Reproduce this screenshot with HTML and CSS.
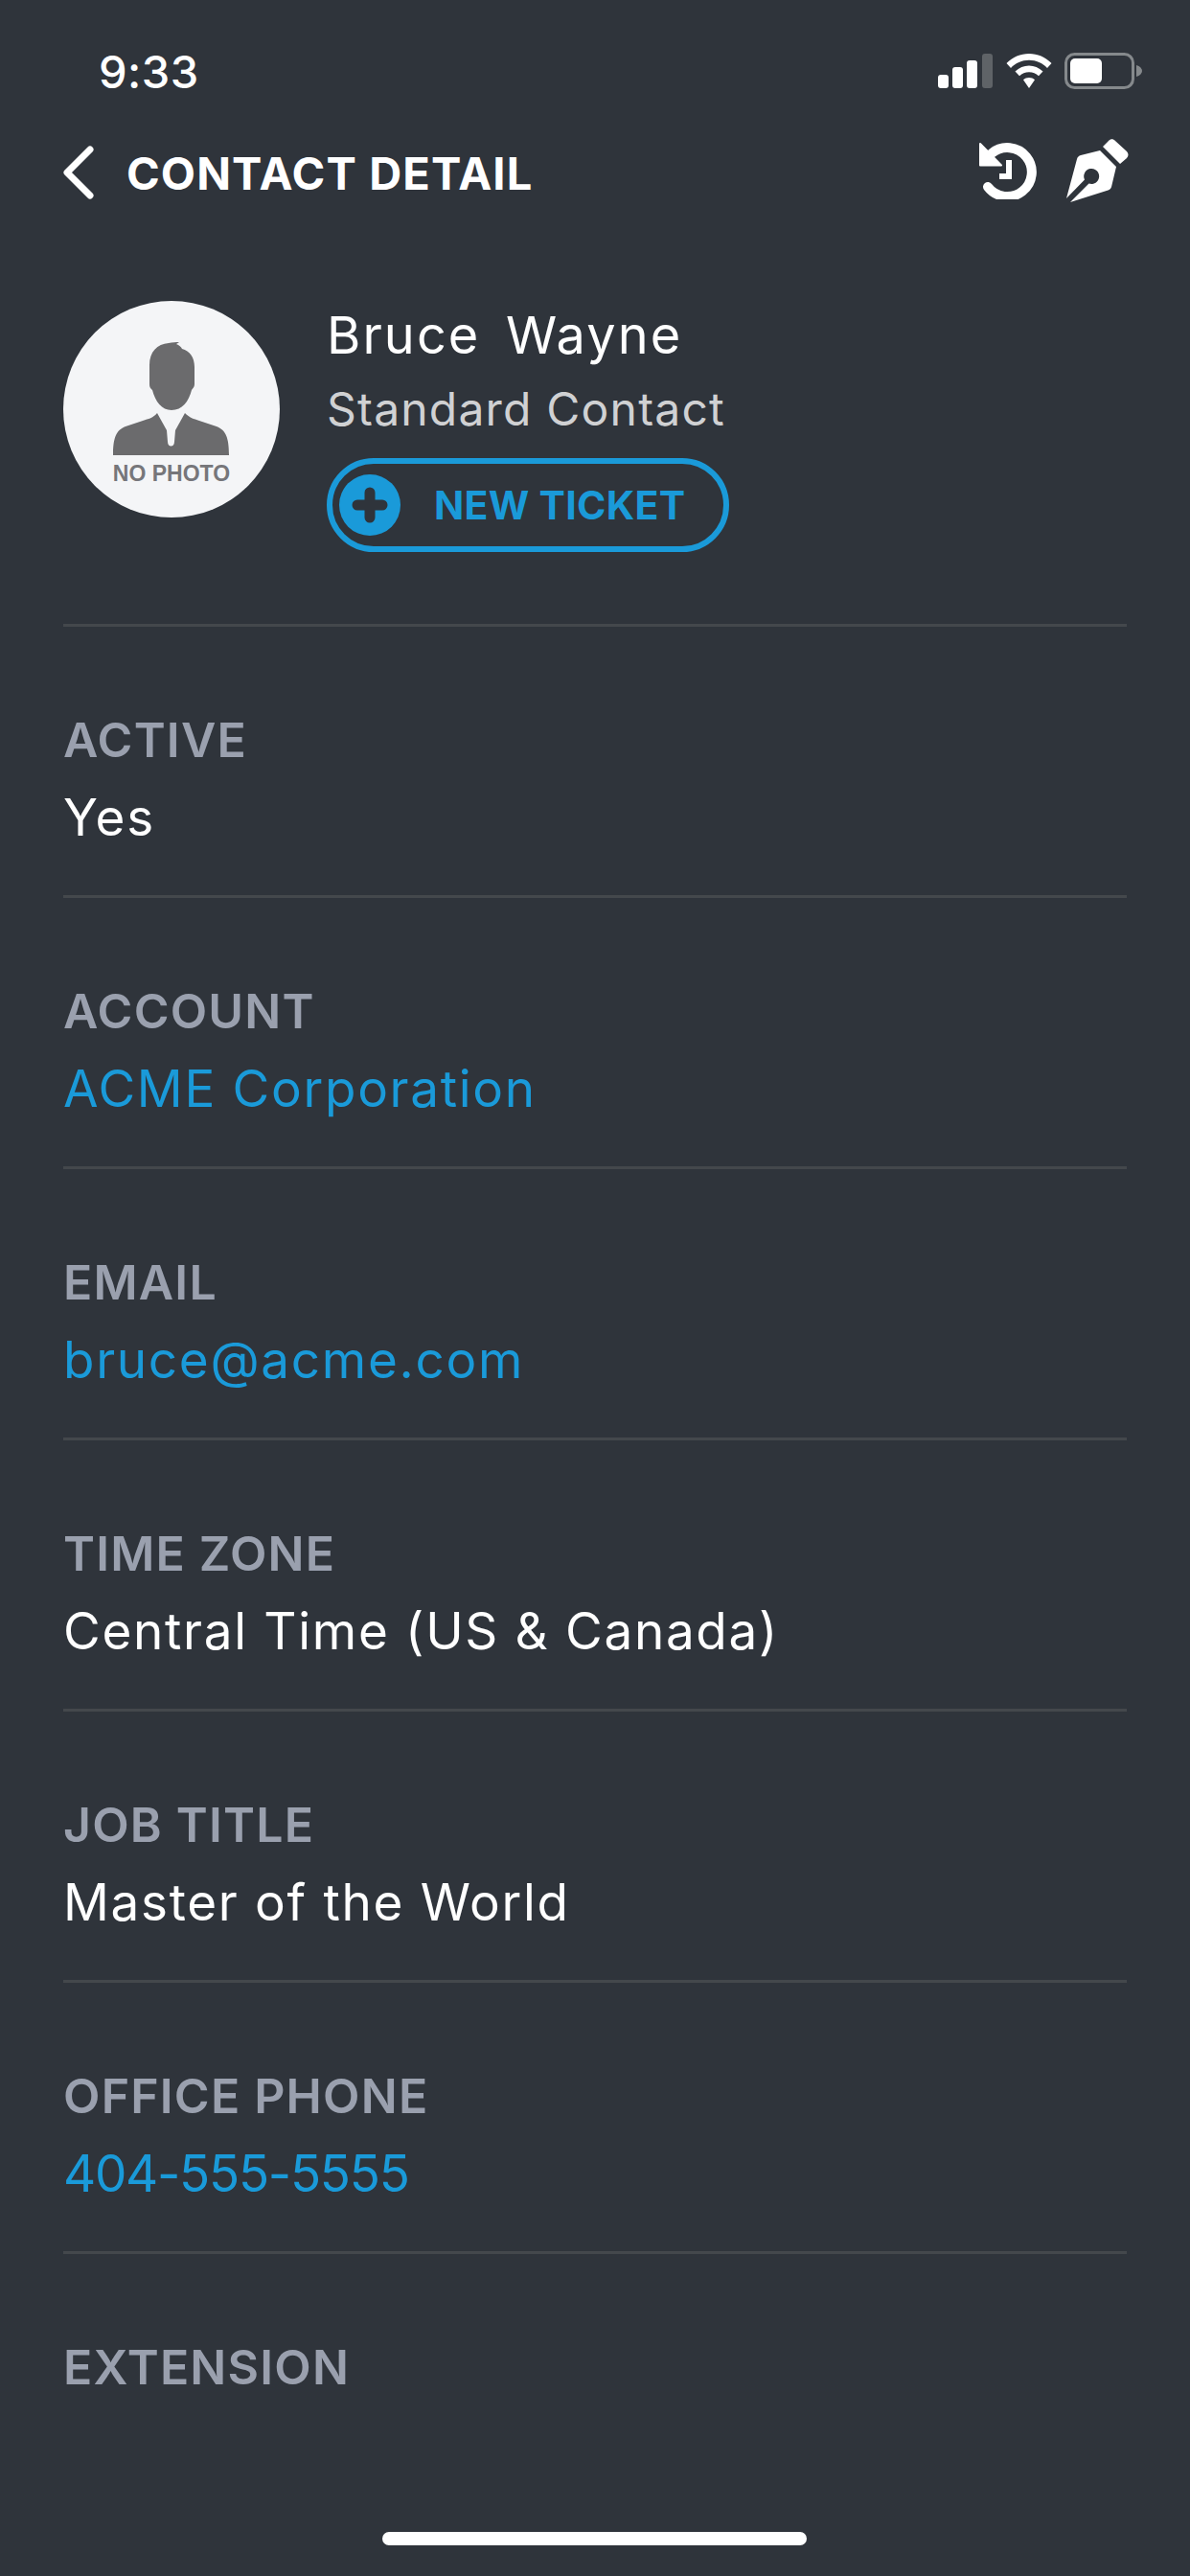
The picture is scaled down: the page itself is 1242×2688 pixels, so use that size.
FILE: index.html
```html
<!DOCTYPE html>
<html lang="en">
<head>
    <meta charset="UTF-8">
    <meta name="viewport" content="width=device-width, initial-scale=1.0">
    <title>Contact Detail</title>
    <link rel="stylesheet" href="styles.css">
</head>
<body>
    <div class="screen">
        <div class="status-bar">
            <span class="clock">9:33</span>
            <div class="status-icons">
                <svg class="signal" width="58" height="36" viewBox="0 0 58 36">
                    <rect x="0" y="22" width="11" height="14" rx="3" fill="#fff"/>
                    <rect x="15" y="14" width="11" height="22" rx="3" fill="#fff"/>
                    <rect x="30" y="7" width="11" height="29" rx="3" fill="#fff"/>
                    <rect x="46" y="0" width="11" height="36" rx="3" fill="#5f6367"/>
                </svg>
                <svg class="wifi" width="48" height="36" viewBox="0 0 48 36">
                    <path d="M24 0C15 0 7 3.500 0.500 10L5 15C10 9.800 16.500 6.800 24 6.800S38 9.800 43 15L47.500 10C41 3.500 33 0 24 0Z" fill="#fff"/>
                    <path d="M24 12.500C18.500 12.500 13.800 14.600 9.500 18.500L14 23.300C16.800 20.800 20 19.300 24 19.300S31.200 20.800 34 23.300L38.500 18.500C34.200 14.600 29.500 12.500 24 12.500Z" fill="#fff"/>
                    <path d="M24 25C21.500 25 19.800 25.800 18 27.300L24 36L30 27.300C28.200 25.800 26.500 25 24 25Z" fill="#fff"/>
                </svg>
                <svg class="battery" width="82" height="38" viewBox="0 0 82 38">
                    <rect x="1.500" y="1.500" width="70" height="35" rx="9" fill="none" stroke="#85898c" stroke-width="3"/>
                    <rect x="6" y="6" width="33" height="26" rx="5" fill="#fff"/>
                    <path d="M75 13C79 14 81 16.500 81 19S79 24 75 25Z" fill="#85898c"/>
                </svg>
            </div>
        </div>

        <div class="nav-bar">
            <svg class="back-icon" width="32" height="56" viewBox="0 0 32 56">
                <path d="M28 4L4 28L28 52" fill="none" stroke="#fff" stroke-width="7" stroke-linecap="round" stroke-linejoin="round"/>
            </svg>
            <span class="nav-title">CONTACT DETAIL</span>
            <div class="nav-actions">
                <svg width="60" height="60" viewBox="0 0 60 60">
                    <path d="M13 12A25.500 25.500 0 1 1 9 47" fill="none" stroke="#fff" stroke-width="10" stroke-linecap="round"/>
                    <path d="M1 2L1 24.500L23 24.500Z" fill="#fff" stroke="#fff" stroke-width="2" stroke-linejoin="round"/>
                    <path d="M31 19V36H21" fill="none" stroke="#fff" stroke-width="6"/>
                </svg>
                <svg width="68" height="68" viewBox="0 0 68 68">
                    <path d="M41 9L47 3C49 0.500 52 0.500 54 3L66 14C68 16 68 19 66 21L59 27Z" fill="#fff"/>
                    <path fill-rule="evenodd" fill="#fff" d="M38 13L55 30L50 51C49.500 53 48 54 46.500 54.600L7 67L26.500 47.500A8 8 0 1 0 22 43.500L3 63L14 22C14.500 20 16 18.500 18 18Z"/>
                </svg>
            </div>
        </div>

        <div class="profile">
            <div class="avatar">
                <svg width="122" height="118" viewBox="0 0 122 118">
                    <path d="M38 24C38 10 46 2 58 1C62 0 66 0 69 0L66 2C69 3 71 5 72 7C80 9 85 16 85 26V44C85 47 83 48 82 50C79 62 72 71 61 71C51 71 44 62 41 50C39 48 38 47 38 44Z" fill="#6b6b6d"/>
                    <path d="M46 74L56 92L57 104C57 110 64 110 64 104L65 92L75 74C80 79 84 80 90 82L108 88C118 92 121 100 121 118H0C0 100 3 92 13 88L31 82C37 80 42 79 46 74Z" fill="#6b6b6d"/>
                </svg>
                <span class="no-photo">NO PHOTO</span>
            </div>
            <div class="profile-info">
                <div class="profile-name">Bruce&nbsp; Wayne</div>
                <div class="profile-type">Standard Contact</div>
                <a class="new-ticket">
                    <svg width="64" height="64" viewBox="0 0 64 64">
                        <circle cx="32" cy="32" r="32" fill="#1a9ad9"/>
                        <path d="M32 19V45M19 32H45" stroke="#2f343b" stroke-width="11" stroke-linecap="round"/>
                    </svg>
                    <span>NEW TICKET</span>
                </a>
            </div>
        </div>

        <div class="field">
            <div class="field-label">ACTIVE</div>
            <div class="field-value">Yes</div>
        </div>
        <div class="field">
            <div class="field-label">ACCOUNT</div>
            <div class="field-value link">ACME Corporation</div>
        </div>
        <div class="field">
            <div class="field-label">EMAIL</div>
            <div class="field-value link">bruce@acme.com</div>
        </div>
        <div class="field">
            <div class="field-label">TIME ZONE</div>
            <div class="field-value">Central Time (US &amp; Canada)</div>
        </div>
        <div class="field">
            <div class="field-label">JOB TITLE</div>
            <div class="field-value">Master of the World</div>
        </div>
        <div class="field">
            <div class="field-label">OFFICE PHONE</div>
            <div class="field-value link phone">404-555-5555</div>
        </div>
        <div class="field">
            <div class="field-label">EXTENSION</div>
        </div>

        <div class="home-indicator"></div>
    </div>
</body>
</html>
```

FILE: styles.css
```css
html, body {
    margin: 0;
    padding: 0;
    background-color: #2f343b;
}
.screen {
    height: 2688px;
    overflow: hidden;
    display: flex;
    flex-direction: column;
    padding: 0 66px;
    box-sizing: border-box;
    font-family: Inter, "Noto Sans", sans-serif;
    color: #fff;
}
.status-bar {
    height: 56px;
    padding-top: 46px;
    display: flex;
    justify-content: space-between;
    align-items: center;
}
.clock {
    margin-left: 37px;
    font-size: 47px;
    font-weight: 500;
    letter-spacing: 0.5px;
}
.status-icons {
    margin-right: -17px;
    display: flex;
    align-items: center;
    gap: 13px;
}
.nav-bar {
    margin-top: 43px;
    height: 70px;
    display: flex;
    align-items: center;
}
.nav-title {
    margin-left: 34px;
    font-size: 47px;
    font-weight: 700;
    letter-spacing: 1.1px;
}
.nav-actions {
    margin-left: auto;
    margin-right: -2px;
    margin-top: -5px;
    display: flex;
    align-items: center;
    gap: 28px;
}
.profile {
    margin-top: 99px;
    height: 337px;
    display: flex;
    align-items: flex-start;
    gap: 49px;
}
.avatar {
    width: 226px;
    height: 226px;
    border-radius: 50%;
    background-color: #f4f5f7;
    display: flex;
    flex-direction: column;
    align-items: center;
    padding-top: 43px;
    box-sizing: border-box;
}
.no-photo {
    margin-top: 7px;
    font-family: "Liberation Sans", Arial, sans-serif;
    font-size: 23px;
    font-weight: 700;
    line-height: 24px;
    color: #76767a;
}
.profile-name {
    margin-top: 4px;
    font-size: 54px;
    line-height: 64px;
    letter-spacing: 2.1px;
    word-spacing: -4px;
}
.profile-type {
    margin-top: 15px;
    font-size: 48px;
    line-height: 60px;
    letter-spacing: 1.2px;
    color: #d0d1d3;
}
.new-ticket {
    margin-top: 21px;
    width: 420px;
    height: 98px;
    box-sizing: border-box;
    border: 6px solid #1a9ad9;
    border-radius: 49px;
    display: flex;
    align-items: center;
    padding-left: 7px;
    gap: 35px;
    color: #1a9ad9;
    font-size: 41px;
    font-weight: 700;
    letter-spacing: 0.3px;
}
.field {
    height: 283px;
    flex: none;
    border-top: 3px solid #44484c;
    box-sizing: border-box;
    padding-top: 85px;
}
.field-label {
    font-size: 50px;
    line-height: 66px;
    font-weight: 600;
    letter-spacing: 1.2px;
    color: #9aa0ae;
}
.field-value {
    margin-top: 15px;
    font-size: 53px;
    line-height: 66px;
    letter-spacing: 1.7px;
}
.field-value.link {
    color: #1a9ad9;
}
.field-value.phone {
    letter-spacing: -1.3px;
}
.home-indicator {
    position: absolute;
    left: 399px;
    top: 2642px;
    width: 443px;
    height: 14px;
    border-radius: 7px;
    background-color: #fff;
}
```
